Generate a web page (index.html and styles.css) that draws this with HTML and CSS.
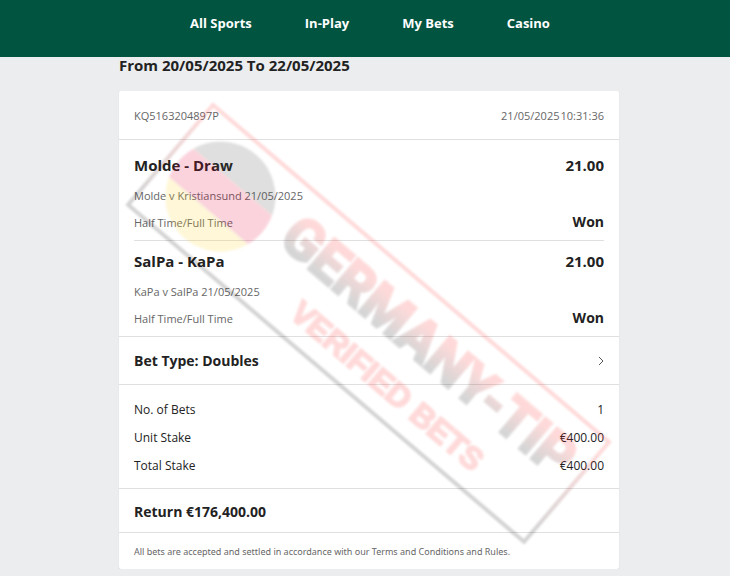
FILE: index.html
```html
<!DOCTYPE html>
<html lang="en">
<head>
    <meta charset="UTF-8">
    <meta name="viewport" content="width=device-width, initial-scale=1.0">
    <title>My Bets</title>
    <link rel="stylesheet" href="styles.css">
</head>
<body>
    <header>
        <nav>
            <a href="#">All Sports</a>
            <a href="#">In-Play</a>
            <a href="#">My Bets</a>
            <a href="#">Casino</a>
        </nav>
    </header>

    <main>
        <h1>From 20/05/2025 To 22/05/2025</h1>

        <div class="slip">
            <div class="slip-header">
                <span>KQ5163204897P</span>
                <span class="slip-time"><span>21/05/2025</span><span>10:31:36</span></span>
            </div>

            <!-- Selections -->
            <div class="selections">
                <div class="selection">
                    <div class="row title">
                        <h2>Molde - Draw</h2>
                        <strong>21.00</strong>
                    </div>
                    <p class="event">Molde v Kristiansund 21/05/2025</p>
                    <div class="row market">
                        <span>Half Time/Full Time</span>
                        <strong>Won</strong>
                    </div>
                </div>
                <div class="selection">
                    <div class="row title">
                        <h2>SalPa - KaPa</h2>
                        <strong>21.00</strong>
                    </div>
                    <p class="event">KaPa v SalPa 21/05/2025</p>
                    <div class="row market">
                        <span>Half Time/Full Time</span>
                        <strong>Won</strong>
                    </div>
                </div>
            </div>

            <button type="button" class="bet-type">
                Bet Type: Doubles
                <svg width="6" height="10" viewBox="0 0 6 10" aria-hidden="true">
                    <path d="M1 1l4 4-4 4" fill="none" stroke="#555" stroke-width="1"/>
                </svg>
            </button>

            <!-- Stakes -->
            <dl class="stakes">
                <div class="row"><dt>No. of Bets</dt><dd>1</dd></div>
                <div class="row"><dt>Unit Stake</dt><dd>€400.00</dd></div>
                <div class="row"><dt>Total Stake</dt><dd>€400.00</dd></div>
            </dl>

            <div class="return">Return €176,400.00</div>
            <p class="terms">All bets are accepted and settled in accordance with our Terms and Conditions and Rules.</p>

            <!-- Stamp over the slip -->
            <svg class="stamp" viewBox="0 0 500 478" aria-hidden="true">
                <defs>
                    <linearGradient id="frame" gradientUnits="userSpaceOnUse" x1="0" y1="0" x2="0" y2="131">
                        <stop offset="0.1" stop-color="#ff2828"/>
                        <stop offset="0.9" stop-color="#000"/>
                    </linearGradient>
                    <linearGradient id="name" gradientUnits="userSpaceOnUse" x1="0" y1="26" x2="0" y2="60">
                        <stop offset="0.1" stop-color="#ff2828"/>
                        <stop offset="1" stop-color="#111"/>
                    </linearGradient>
                    <clipPath id="ball"><circle cx="65" cy="65" r="55"/></clipPath>
                    <filter id="soft"><feGaussianBlur stdDeviation="1"/></filter>
                </defs>
                <g transform="translate(94 14) rotate(40.4)" filter="url(#soft)">
                    <rect width="520" height="131" fill="none" stroke="url(#frame)" stroke-width="4"/>
                    <g clip-path="url(#ball)">
                        <rect x="10" y="10" width="110" height="36" fill="#444"/>
                        <rect x="10" y="46" width="110" height="38" fill="#e6003c"/>
                        <rect x="10" y="84" width="110" height="38" fill="#ffd21e"/>
                    </g>
                    <text class="stamp-name" x="138" y="63" fill="url(#name)" stroke="url(#name)">GERMANY-TIP</text>
                    <text class="stamp-note" x="194" y="112">VERIFIED BETS</text>
                </g>
            </svg>
        </div>
    </main>
</body>
</html>
```

FILE: styles.css
```css
* {
    margin: 0;
    padding: 0;
    box-sizing: border-box;
}

body {
    background-color: #ebedee;
    color: #222;
    font-family: "Open Sans", "Noto Sans", sans-serif;
    font-size: 12px;
}

header {
    background-color: #005440;
    height: 57px;
    padding-left: 10px;
}

nav {
    display: flex;
    justify-content: center;
    gap: 53px;
}

nav a {
    color: white;
    font-size: 13px;
    font-weight: bold;
    line-height: 46px;
    text-decoration: none;
}

main {
    max-width: 508px;
    margin: 0 auto;
    padding-left: 8px;
}

h1 {
    font-size: 15px;
    line-height: 16px;
    margin-bottom: 18px;
}

.slip {
    position: relative;
    background-color: white;
    border-radius: 2px;
    box-shadow: 0 1px 1px #ccc;
}

.slip-header {
    display: flex;
    justify-content: space-between;
    padding: 2px 15px 0;
    line-height: 46px;
    font-size: 11px;
    color: #666;
    border-bottom: 1px solid #e0e0e0;
}

.slip-time {
    display: flex;
    gap: 1px;
}

.row {
    display: flex;
    justify-content: space-between;
}

.selections {
    padding: 5px 15px 0;
    border-bottom: 1px solid #e0e0e0;
}

.selection {
    padding: 8px 0 4px;
}

.selection + .selection {
    border-top: 1px solid #e0e0e0;
}

h2, strong {
    font-size: 15px;
    font-weight: bold;
}

.title {
    line-height: 24px;
}

.event {
    margin-top: 5px;
    line-height: 28px;
    font-size: 11px;
    color: #666;
}

.market {
    line-height: 26px;
    font-size: 11px;
    color: #666;
}

.market strong {
    color: #222;
    font-size: 14px;
    line-height: 24px;
}

.bet-type {
    display: flex;
    justify-content: space-between;
    align-items: center;
    width: 100%;
    padding: 0 15px;
    background: none;
    border: none;
    border-bottom: 1px solid #e0e0e0;
    color: #222;
    font: bold 14px/47px "Open Sans", "Noto Sans", sans-serif;
    cursor: pointer;
}

.stakes {
    padding: 11px 15px 8px;
    border-bottom: 1px solid #e0e0e0;
    line-height: 28px;
}

.return {
    padding: 2px 15px 0;
    border-bottom: 1px solid #e0e0e0;
    font-size: 14px;
    font-weight: bold;
    line-height: 41px;
}

.terms {
    padding: 2px 15px 0;
    color: #666;
    font-family: "Noto Sans", "Open Sans", sans-serif;
    font-size: 9px;
    line-height: 34px;
}

.stamp {
    position: absolute;
    top: 0;
    left: 0;
    width: 100%;
    opacity: 0.17;
    pointer-events: none;
}

.stamp text {
    font-family: "Liberation Sans", Arial, sans-serif;
    font-weight: bold;
}

.stamp .stamp-name {
    font-family: Roboto, "Liberation Sans", sans-serif;
    font-size: 55px;
    stroke-width: 3px;
}

.stamp-note {
    font-size: 32px;
    fill: #ff2828;
    stroke: #ff2828;
    stroke-width: 2px;
}
```
